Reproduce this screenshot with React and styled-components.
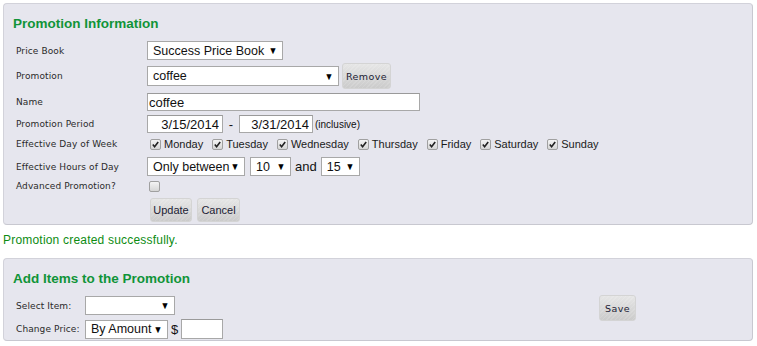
import React from 'react'
import styled, { createGlobalStyle } from 'styled-components'

const days = ['Monday', 'Tuesday', 'Wednesday', 'Thursday', 'Friday', 'Saturday', 'Sunday']

const App = () => (
  <>
    <Global />
    <Page>
      <Panel>
        <Title>Promotion Information</Title>
        <Row $h={19}>
          <Label>Price Book</Label>
          <Field>
            <Select $w={136}>
              <span>Success Price Book</span>
              <Arrow>▼</Arrow>
            </Select>
          </Field>
        </Row>
        <Row $h={26} $mt={3}>
          <Label>Promotion</Label>
          <Field>
            <Select $w={192} $h={20}>
              <span>coffee</span>
              <Arrow>▼</Arrow>
            </Select>
            <Button $w={49} $h={26} $ml={3} $verdana>
              Remove
            </Button>
          </Field>
        </Row>
        <Row $h={18} $mt={4}>
          <Label>Name</Label>
          <Field>
            <Input $w={273} defaultValue="coffee" readOnly />
          </Field>
        </Row>
        <Row $h={18} $mt={4}>
          <Label>Promotion Period</Label>
          <Field>
            <Input $w={76} $right defaultValue="3/15/2014" readOnly />
            <Dash>-</Dash>
            <Input $w={74} $right defaultValue="3/31/2014" readOnly />
            <Note>(inclusive)</Note>
          </Field>
        </Row>
        <Row $h={14} $mt={4}>
          <Label>Effective Day of Week</Label>
          <Field>
            <Days>
              {days.map((d) => (
                <Day key={d}>
                  <Check>
                    <svg width="9" height="9" viewBox="0 0 9 9">
                      <path d="M1.8 4.6 L3.6 6.8 L7.2 2" fill="none" stroke="#222" strokeWidth="1.6" />
                    </svg>
                  </Check>
                  {d}
                </Day>
              ))}
            </Days>
          </Field>
        </Row>
        <Row $h={19} $mt={6}>
          <Label>Effective Hours of Day</Label>
          <Field>
            <Select $w={98}>
              <span>Only between</span>
              <Arrow>▼</Arrow>
            </Select>
            <Select $w={41} $ml={5}>
              <span>10</span>
              <Arrow>▼</Arrow>
            </Select>
            <Word>and</Word>
            <Select $w={39}>
              <span>15</span>
              <Arrow>▼</Arrow>
            </Select>
          </Field>
        </Row>
        <Row $h={12} $mt={4}>
          <Label>Advanced Promotion?</Label>
          <Field>
            <Check $ml={2} />
          </Field>
        </Row>
        <Row $h={24} $mt={6}>
          <span />
          <Field>
            <Button $w={42} $ml={3}>Update</Button>
            <Button $w={43} $ml={5}>Cancel</Button>
          </Field>
        </Row>
      </Panel>

      <Message>Promotion created successfully.</Message>

      <Panel $last>
        <Title>Add Items to the Promotion</Title>
        <ItemsBody>
          <ItemsForm>
            <Row $h={18} $label={69}>
              <Label>Select Item:</Label>
              <Field>
                <Select $w={90} $h={19}>
                  <span />
                  <Arrow>▼</Arrow>
                </Select>
              </Field>
            </Row>
            <Row $h={20} $mt={5} $label={69}>
              <Label>Change Price:</Label>
              <Field>
                <Select $w={83}>
                  <span>By Amount</span>
                  <Arrow>▼</Arrow>
                </Select>
                <Dollar>$</Dollar>
                <Input $w={42} $h={20} readOnly />
              </Field>
            </Row>
          </ItemsForm>
          <Button $w={37} $h={26} $verdana>
            Save
          </Button>
        </ItemsBody>
      </Panel>
    </Page>
  </>
)

export default App

const Global = createGlobalStyle`
  body {
    margin: 0;
    background: #fff;
    font-family: "Liberation Sans", Arial, sans-serif;
  }
`

const Page = styled.div`
  width: 757px;
  height: 346px;
  overflow: hidden;
  padding: 3px 0 0 3px;
  box-sizing: border-box;
`

const Panel = styled.div`
  width: 750px;
  box-sizing: border-box;
  background: #e6e6ee;
  border: 1px solid #d2d2da;
  border-right-color: #c8c8d0;
  border-bottom-color: #c8c8d0;
  border-radius: 4px;
  padding: 10px 9px ${(p) => (p.$last ? '0' : '2px')};
`

const Title = styled.h2`
  margin: 0 0 9px;
  height: 18px;
  line-height: 20px;
  font-size: 13.5px;
  font-weight: bold;
  color: #109438;
`

const Row = styled.div`
  display: grid;
  grid-template-columns: ${(p) => p.$label || 131}px 1fr;
  align-items: center;
  height: ${(p) => p.$h}px;
  margin: ${(p) => p.$mt || 0}px 0 0 3px;
`

const Label = styled.div`
  font-family: "DejaVu Sans", Verdana, sans-serif;
  font-size: 9px;
  letter-spacing: 0.1px;
  color: #2a2a2a;
  white-space: nowrap;
`

const Field = styled.div`
  display: flex;
  align-items: center;
  height: 100%;
`

const Select = styled.div`
  display: flex;
  align-items: center;
  justify-content: space-between;
  box-sizing: border-box;
  width: ${(p) => p.$w}px;
  height: ${(p) => p.$h || 19}px;
  margin-left: ${(p) => p.$ml || 0}px;
  padding: 0 4px 0 5px;
  background: #fff;
  border: 1px solid #a8a8a8;
  font-size: 12.5px;
  color: #111;
  white-space: nowrap;
`

const Arrow = styled.span`
  font-size: 10px;
  color: #000;
  transform: scaleX(0.9);
`

const Input = styled.input`
  box-sizing: border-box;
  width: ${(p) => p.$w}px;
  height: ${(p) => p.$h || 18}px;
  margin: 0;
  padding: 0 ${(p) => (p.$right ? '3px' : '1px')} 0 1px;
  border: 1px solid #a8a8a8;
  border-top-color: #9a9a9a;
  background: #fff;
  font-family: "Liberation Sans", Arial, sans-serif;
  font-size: 13px;
  color: #111;
  text-align: ${(p) => (p.$right ? 'right' : 'left')};
  outline: none;
`

const Dash = styled.span`
  width: 16px;
  text-align: center;
  font-size: 13px;
  color: #111;
`

const Note = styled.span`
  margin-left: 2px;
  font-size: 10px;
  color: #111;
`

const Word = styled.span`
  margin: 0 4px 0 4px;
  font-size: 13px;
  color: #111;
`

const Dollar = styled.span`
  margin: 0 3px 0 3px;
  font-size: 13px;
  color: #111;
`

const Days = styled.div`
  display: flex;
  align-items: center;
  gap: 9px;
  margin-left: 3px;
`

const Day = styled.label`
  display: flex;
  align-items: center;
  gap: 3px;
  font-size: 11px;
  color: #1a1a1a;
`

const Check = styled.span`
  display: inline-flex;
  align-items: center;
  justify-content: center;
  box-sizing: border-box;
  width: 11px;
  height: 11px;
  margin-left: ${(p) => p.$ml || 0}px;
  border: 1px solid #a0a0a0;
  border-radius: 2px;
  background: linear-gradient(#f4f4f4, #d6d6d6);
`

const Button = styled.button`
  box-sizing: border-box;
  width: ${(p) => p.$w}px;
  height: ${(p) => p.$h || 24}px;
  margin-left: ${(p) => p.$ml || 0}px;
  padding: 0;
  border: 1px solid #d4d4d4;
  border-radius: 3px;
  background: repeating-linear-gradient(135deg, rgba(255, 255, 255, 0.12) 0 1px, transparent 1px 3px),
    linear-gradient(#e6e6e6, #cbcbcb);
  font-family: ${(p) =>
    p.$verdana ? '"DejaVu Sans", Verdana, sans-serif' : '"Liberation Sans", Arial, sans-serif'};
  font-size: ${(p) => (p.$verdana ? '9.5px' : '11px')};
  letter-spacing: ${(p) => (p.$verdana ? '0.4px' : '0')};
  color: #1c1c34;
  cursor: pointer;
`

const Message = styled.div`
  margin: 8px 0 11px;
  height: 14px;
  line-height: 14px;
  font-size: 12px;
  letter-spacing: 0.2px;
  color: #0d8c12;
`

const ItemsBody = styled.div`
  display: flex;
  align-items: flex-start;
`

const ItemsForm = styled.div`
  width: 586px;
  padding-bottom: 1px;

  & + button {
    margin-top: -1px;
  }
`
